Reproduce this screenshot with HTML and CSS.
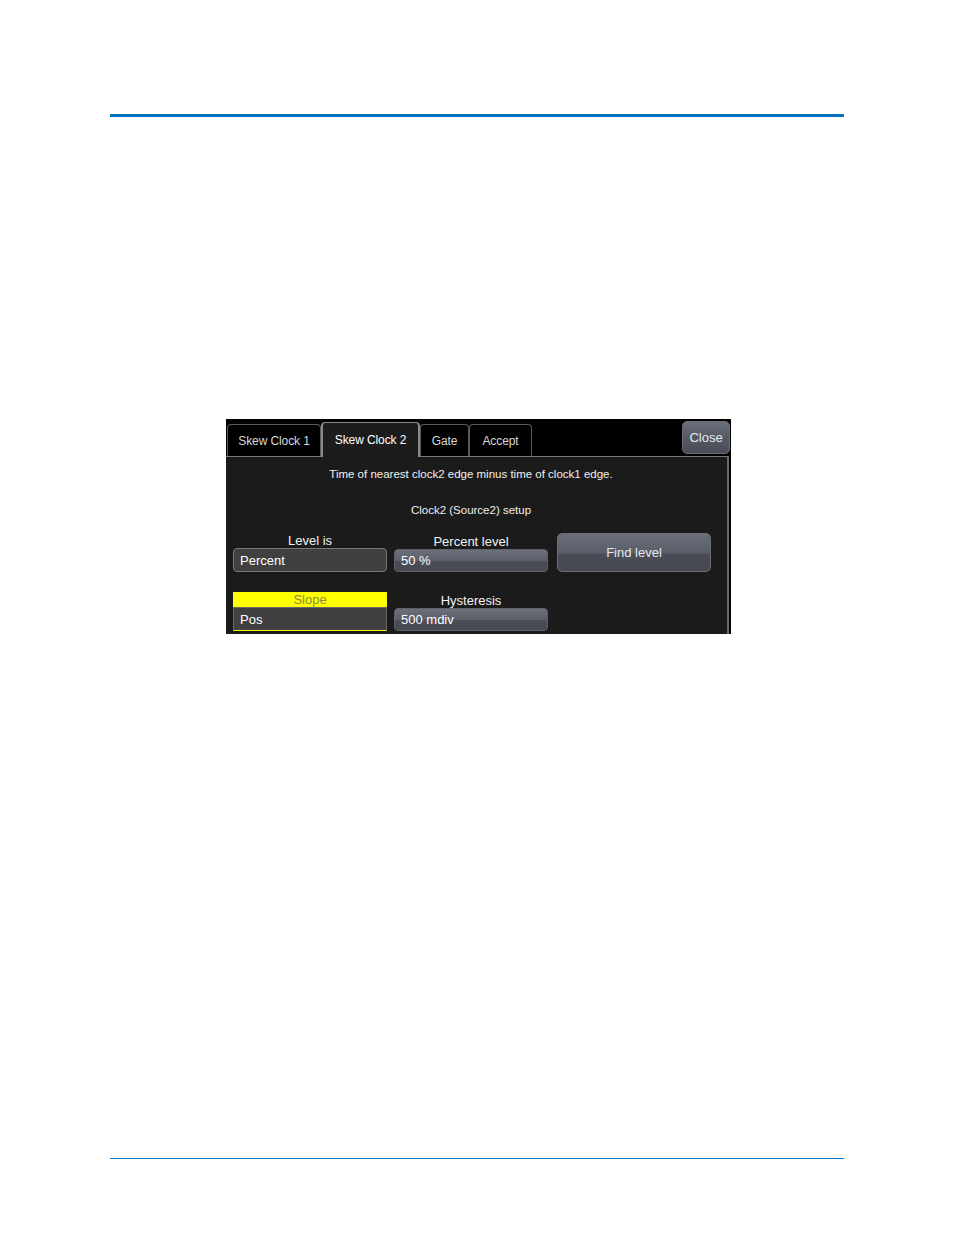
FILE: index.html
```html
<!DOCTYPE html>
<html>
<head>
<meta charset="utf-8">
<link rel="stylesheet" href="styles.css">
</head>
<body>
<div class="rule-top"></div>
<div class="panel">
  <div class="tabbar">
    <div class="tab t1">Skew Clock 1</div>
    <div class="tab active t2">Skew Clock 2</div>
    <div class="tab t3">Gate</div>
    <div class="tab t4">Accept</div>
    <div class="spacer"></div>
    <div class="close">Close</div>
  </div>
  <div class="content">
    <div class="desc">Time of nearest clock2 edge minus time of clock1 edge.</div>
    <div class="setup">Clock2 (Source2) setup</div>
    <div class="row row1">
      <div class="ctl">
        <div class="lbl">Level is</div>
        <div class="field flat">Percent</div>
      </div>
      <div class="ctl">
        <div class="lbl">Percent level</div>
        <div class="field grad">50 %</div>
      </div>
      <div class="btn">Find level</div>
    </div>
    <div class="row row2">
      <div class="ctl sel">
        <div class="lbl yellow">Slope</div>
        <div class="field flat">Pos</div>
      </div>
      <div class="ctl">
        <div class="lbl">Hysteresis</div>
        <div class="field grad">500 mdiv</div>
      </div>
    </div>
  </div>
</div>
<div class="rule-bottom"></div>
</body>
</html>
```
FILE: styles.css
```css
html, body { margin: 0; padding: 0; background: #fff; }
body { font-family: "Liberation Sans", Arial, sans-serif; height: 1235px; overflow: hidden; }
.rule-top { margin: 114px 0 0 110px; width: 734px; height: 3px; background: #0473bd; }
.rule-bottom { margin: 524px 0 0 110px; width: 734px; height: 1px; background: #0a7acb; }
.panel { margin: 302px 0 0 226px; width: 505px; height: 215px; background: #000; display: flex; flex-direction: column; }
.tabbar { height: 37px; display: flex; align-items: flex-end; padding-left: 1px; position: relative; }
.tab { box-sizing: border-box; height: 32px; border: 1px solid #5a5a5a; border-bottom: none; border-radius: 4px 4px 0 0; color: #d8d8d8; font-size: 12px; letter-spacing: -0.1px; display: flex; align-items: center; justify-content: center; background: #000; }
.t1 { width: 94px; }
.t2 { width: 99px; }
.t3 { width: 49px; }
.t4 { width: 63px; }
.tab.active { height: 35px; background: #1c1c1c; border-color: #8a8a8a; border-width: 1px 2px 0 2px; color: #fff; margin-bottom: -1px; position: relative; z-index: 2; }
.spacer { flex: 1; }
.close { position: absolute; right: 1px; top: 2px; box-sizing: border-box; width: 48px; height: 33px; border: 1px solid #6c7078; border-radius: 5px; background: linear-gradient(#6b6f7a, #555964 50%, #4a4d56); color: #e8e8ee; font-size: 13px; display: flex; align-items: center; justify-content: center; }
.content { flex: 1; background: #1b1b1b; border-top: 1px solid #7a7a7a; border-right: 2px solid #6a6a6a; margin-right: 2px; position: relative; }
.desc { color: #f0f0f0; font-size: 11.5px; text-align: center; margin: 10px 0 0 -11px; line-height: 14px; }
.setup { color: #f0f0f0; font-size: 11.5px; text-align: center; margin: 22px 0 0 -11px; line-height: 14px; }
.row { display: flex; gap: 7px; padding-left: 7px; align-items: flex-end; }
.row1 { margin-top: 16px; }
.row2 { margin-top: 20px; }
.ctl { width: 154px; display: flex; flex-direction: column; }
.lbl { color: #f2f2f2; font-size: 13px; text-align: center; line-height: 14px; height: 14px; }
.lbl.yellow { background: #ffff00; color: #8a8a4a; height: 15px; line-height: 16px; }
.field { box-sizing: border-box; height: 24px; border: 1px solid #777; border-radius: 4px; color: #fff; font-size: 13px; display: flex; align-items: center; padding-left: 6px; }
.flat { background: #404040; }
.grad { background: linear-gradient(#6c707b, #5b5f6a 50%, #4a4d56 55%, #464951); border-color: #5e616a; height: 23px; }
.sel .field { border-color: #666; border-bottom-color: #ffff00; border-radius: 0 0 0 0; }
.btn { box-sizing: border-box; width: 154px; height: 39px; margin-left: 2px; border: 1px solid #6a6d74; border-radius: 5px; background: linear-gradient(#6a6e7a, #5a5e69 50%, #4a4d56 55%, #464951); color: #e8e8ee; font-size: 13px; display: flex; align-items: center; justify-content: center; }
```
